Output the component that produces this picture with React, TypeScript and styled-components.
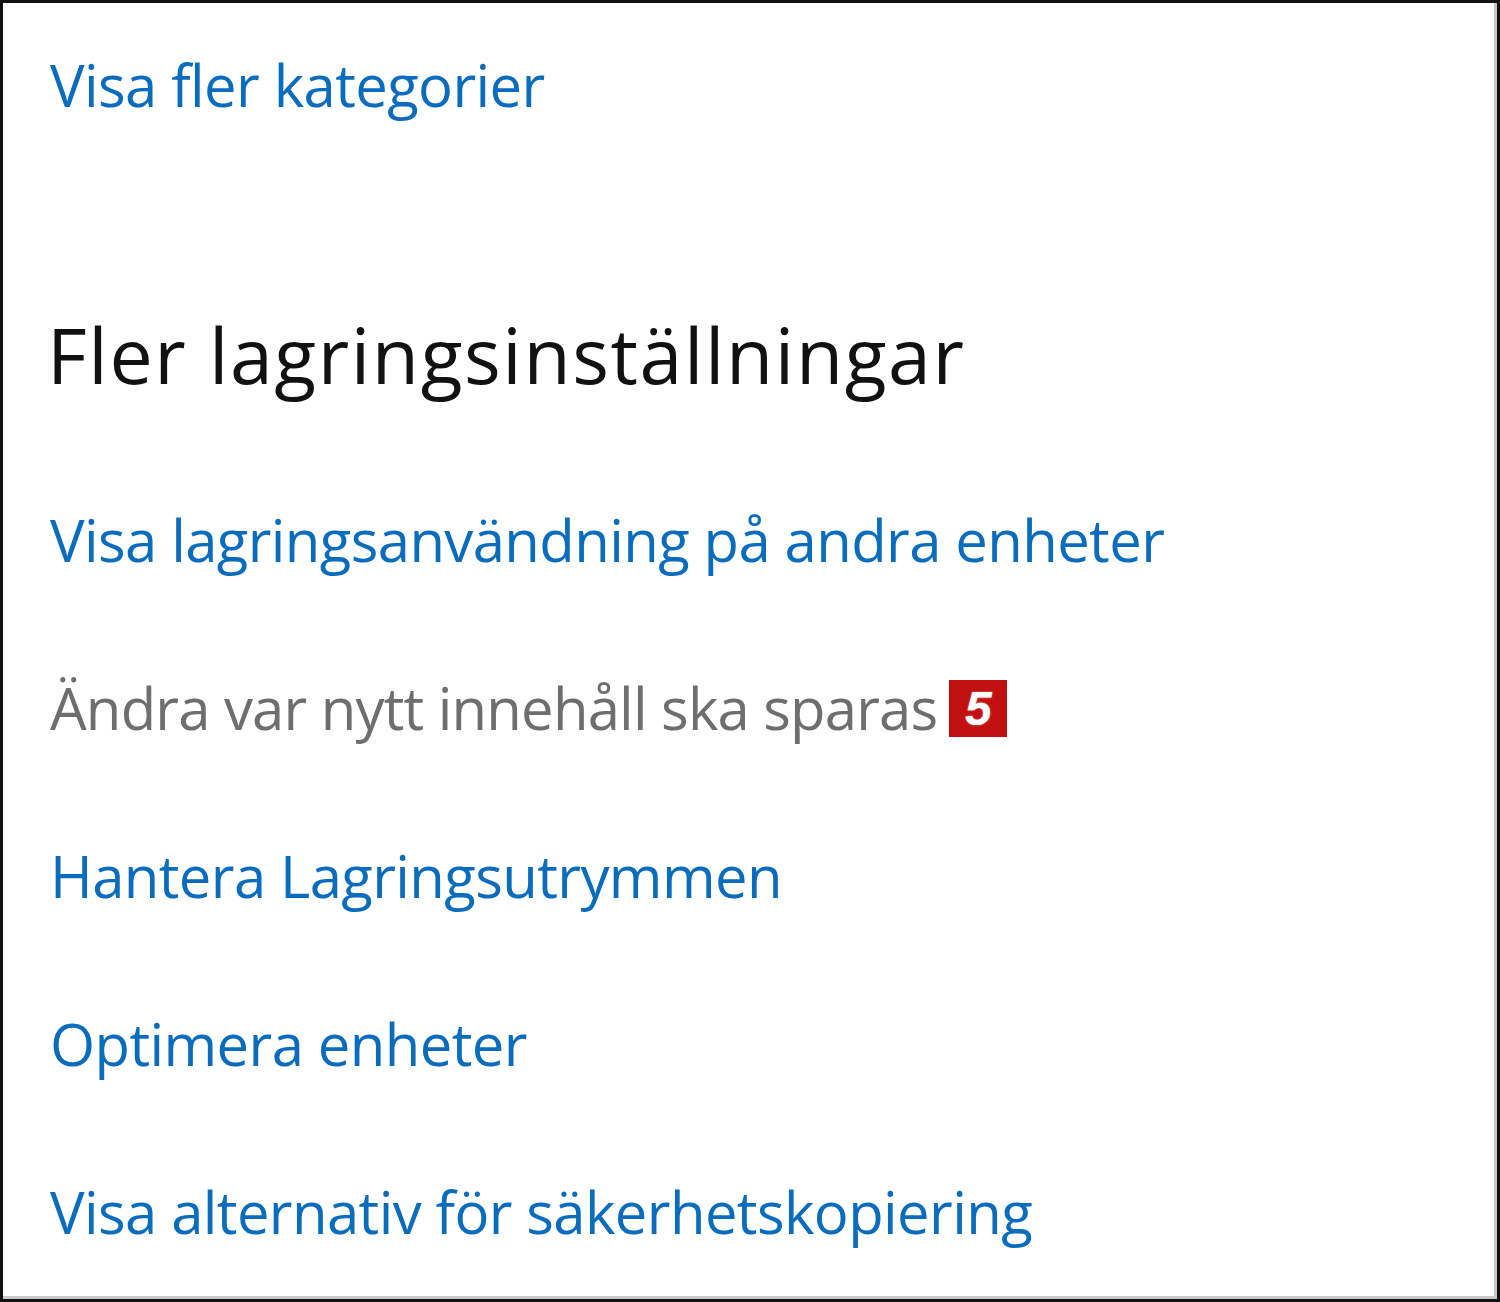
import React from "react";
import styled, { createGlobalStyle } from "styled-components";

const Global = createGlobalStyle`
  html, body {
    margin: 0;
    padding: 0;
    background: #ffffff;
  }
`;

const Frame = styled.section`
  box-sizing: border-box;
  width: 1500px;
  height: 1302px;
  overflow: hidden;
  border: 3px solid #111;
  box-shadow: inset -3px -3px 0 #c8c8c8;
  background: #fff;
  padding: 42px 0 0 47px;
  display: flex;
  flex-direction: column;
  font-family: "Open Sans", "Noto Sans", sans-serif;
`;

const Link = styled.a<{ $rowHeight?: number }>`
  display: block;
  font-size: 58px;
  letter-spacing: -0.6px;
  line-height: ${p => p.$rowHeight ?? 168}px;
  height: ${p => p.$rowHeight ?? 168}px;
  color: #0a6cbc;
  text-decoration: none;
  white-space: nowrap;
  cursor: pointer;
`;

const Disabled = styled.div`
  font-size: 58px;
  letter-spacing: -0.8px;
  line-height: 168px;
  height: 168px;
  color: #6e6e6e;
  white-space: nowrap;
`;

const Heading = styled.h2`
  margin: 180px 0 51px -3px;
  font-size: 77px;
  letter-spacing: 1.6px;
  line-height: 100px;
  height: 100px;
  font-weight: 400;
  color: #111;
  white-space: nowrap;
`;

const Badge = styled.span`
  display: inline-block;
  overflow: hidden;
  width: 58px;
  height: 57px;
  margin-left: 12px;
  vertical-align: -7px;
  background: #c0100f;
  color: #fff;
  font-family: "Liberation Sans", Arial, sans-serif;
  font-weight: 700;
  font-style: italic;
  font-size: 48px;
  letter-spacing: 0;
  line-height: 57px;
  text-align: center;
  text-shadow: 0 0 2px rgba(255, 255, 255, 0.6);
`;

const Links = styled.nav`
  display: flex;
  flex-direction: column;
`;

export default function App() {
  return (
    <>
      <Global />
      <Frame>
        <Link $rowHeight={80}>Visa fler kategorier</Link>
        <Heading>Fler lagringsinställningar</Heading>
        <Links>
          <Link>Visa lagringsanvändning på andra enheter</Link>
          <Disabled>
            Ändra var nytt innehåll ska sparas
            <Badge>5</Badge>
          </Disabled>
          <Link>Hantera Lagringsutrymmen</Link>
          <Link>Optimera enheter</Link>
          <Link>Visa alternativ för säkerhetskopiering</Link>
        </Links>
      </Frame>
    </>
  );
}
